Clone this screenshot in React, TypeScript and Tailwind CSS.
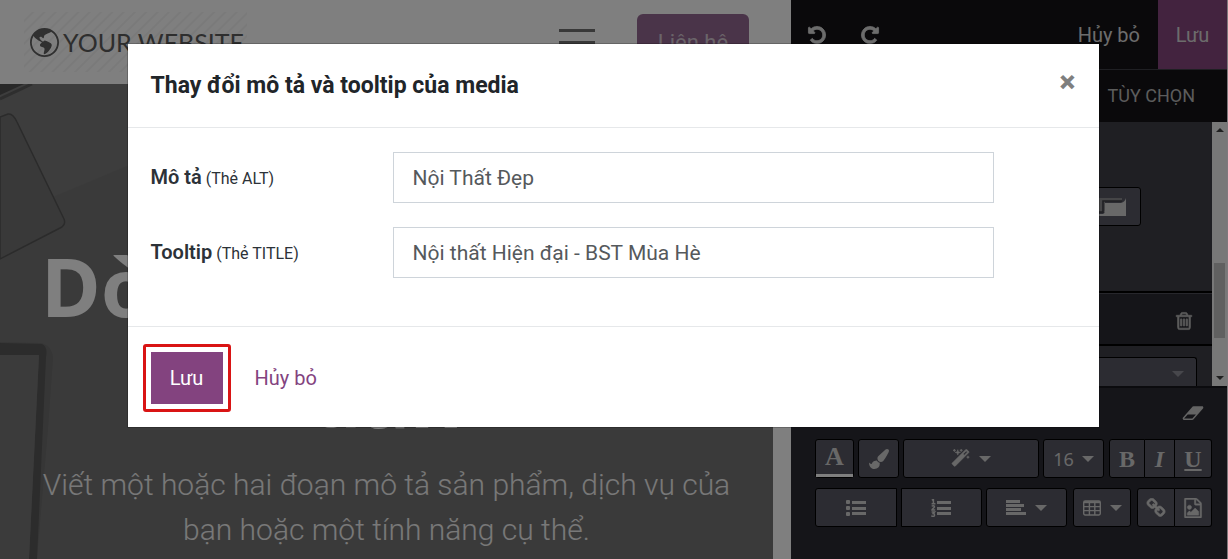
import React from "react";
import { BsGlobeAmericas } from "react-icons/bs";

const undo = "M1664 896q0 156-61 298t-164 245-245 164-298 61q-172 0-327-72.5t-264-204.5q-7-10-6.5-22.5t8.5-20.5l137-138q10-9 25-9 16 2 23 12 73 95 179 147t225 52q104 0 198.5-40.5t163.5-109.5 109.5-163.5 40.5-198.5-40.5-198.5-109.5-163.5-163.5-109.5-198.5-40.5q-98 0-188 35.5t-160 101.5l137 138q31 30 14 69-17 40-59 40h-448q-26 0-45-19t-19-45v-448q0-42 40-59 39-17 69 14l130 129q107-101 244.5-156.5t284.5-55.5q156 0 298 61t245 164 164 245 61 298z";
const redo = "M1664 256v448q0 26-19 45t-45 19h-448q-42 0-59-40-17-39 14-69l138-138q-148-137-349-137-104 0-198.5 40.5t-163.5 109.5-109.5 163.5-40.5 198.5 40.5 198.5 109.5 163.5 163.5 109.5 198.5 40.5q119 0 225-52t179-147q7-10 23-12 15 0 25 9l137 138q9 8 9.5 20.5t-7.5 22.5q-109 132-264 204.5t-327 72.5q-156 0-298-61t-245-164-164-245-61-298 61-298 164-245 245-164 298-61q147 0 284.5 55.5t244.5 156.5l130-129q29-31 70-14 39 17 39 59z";
const trash = "M704 736v576q0 14-9 23t-23 9h-64q-14 0-23-9t-9-23v-576q0-14 9-23t23-9h64q14 0 23 9t9 23zm256 0v576q0 14-9 23t-23 9h-64q-14 0-23-9t-9-23v-576q0-14 9-23t23-9h64q14 0 23 9t9 23zm256 0v576q0 14-9 23t-23 9h-64q-14 0-23-9t-9-23v-576q0-14 9-23t23-9h64q14 0 23 9t9 23zm128 724v-948h-896v948q0 22 7 40.5t14.5 27 10.5 8.5h832q3 0 10.5-8.5t14.5-27 7-40.5zm-672-1076h448l-48-117q-7-9-17-11h-317q-10 2-17 11zm928 32v64q0 14-9 23t-23 9h-96v948q0 83-47 143.5t-113 60.5h-832q-66 0-113-58.5t-47-141.5v-952h-96q-14 0-23-9t-9-23v-64q0-14 9-23t23-9h309l70-167q15-37 54-63t79-26h320q40 0 79 26t54 63l70 167h309q14 0 23 9t9 23z";
const eraser = "M960 1408l336-384h-768l-336 384h768zm1013-1077q15 34 9.5 71.5t-30.5 65.5l-896 1024q-38 44-96 44h-768q-38 0-69.5-20.5t-47.5-54.5q-15-34-9.5-71.5t30.5-65.5l896-1024q38-44 96-44h768q38 0 69.5 20.5t47.5 54.5z";
const magic = "M1254 581l293-293-107-107-293 293zm447-293q0 27-18 45l-1286 1286q-18 18-45 18t-45-18l-198-198q-18-18-18-45t18-45l1286-1286q18-18 45-18t45 18l198 198q18 18 18 45zm-1351-190l98 30-98 30-30 98-30-98-98-30 98-30 30-98zm350 162l196 60-196 60-60 196-60-196-196-60 196-60 60-196zm930 478l98 30-98 30-30 98-30-98-98-30 98-30 30-98zm-640-640l98 30-98 30-30 98-30-98-98-30 98-30 30-98z";
const brush = "M1615 0q70 0 122.5 46.5t52.5 116.5q0 63-45 151-332 629-465 752-97 91-218 91-126 0-216.5-92.5t-90.5-219.5q0-128 92-212l638-579q59-54 130-54zm-909 1034q39 76 106.5 130t150.5 76l1 71q4 213-129.5 347t-348.5 134q-123 0-218-46.5t-152.5-127.5-86.5-183-29-220q7 5 41 30t62 44.5 59 36.5 46 17q41 0 55-37 25-66 57.5-112.5t69.5-76 88-47.5 103-25.5 125-10.5z";
const link = "M1520 1216q0-40-28-68l-208-208q-28-28-68-28-42 0-72 32 3 3 19 18.5t21.5 21.5 15 19 13 25.5 3.5 27.5q0 40-28 68t-68 28q-15 0-27.5-3.5t-25.5-13-19-15-21.5-21.5-18.5-19q-33 31-33 73 0 40 28 68l206 207q27 27 68 27 40 0 68-26l147-146q28-28 28-67zm-703-705q0-40-28-68l-206-207q-28-28-68-28-39 0-68 27l-147 146q-28 28-28 67 0 40 28 68l208 208q27 27 68 27 42 0 72-31-3-3-19-18.5t-21.5-21.5-15-19-13-25.5-3.5-27.5q0-40 28-68t68-28q15 0 27.5 3.5t25.5 13 19 15 21.5 21.5 18.5 19q33-31 33-73zm895 705q0 120-85 203l-147 146q-83 83-203 83-121 0-204-85l-206-207q-83-83-83-203 0-123 88-209l-88-88q-86 88-208 88-120 0-204-84l-208-208q-84-84-84-204t85-203l147-146q83-83 203-83 121 0 204 85l206 207q83 83 83 203 0 123-88 209l88 88q86-88 208-88 120 0 204 84l208 208q84 84 84 204z";
const fileImage = "M1596 380q28 28 48 76t20 88v1152q0 40-28 68t-68 28h-1344q-40 0-68-28t-28-68v-1600q0-40 28-68t68-28h896q40 0 88 20t76 48zm-444-244v376h376q-10-29-22-41l-313-313q-12-12-41-22zm384 1528v-1024h-416q-40 0-68-28t-28-68v-416h-768v1536h1280zm-128-448v320h-1024v-192l192-192 128 128 384-384zm-832-192q-80 0-136-56t-56-136 56-136 136-56 136 56 56 136-56 136-136 56z";

type GlyphProps = { d: string; className: string; box?: string; weight?: number };

function Glyph({ d, className, box = "0 0 1792 1792", weight = 0 }: GlyphProps) {
  return (
    <svg viewBox={box} className={className} fill="currentColor" aria-hidden="true">
      <path d={d} stroke="currentColor" strokeWidth={weight} />
    </svg>
  );
}

function Caret() {
  return (
    <svg viewBox="0 0 12 6" className="h-[6px] w-3" fill="currentColor" aria-hidden="true">
      <path d="M0 0h12L6 6z" />
    </svg>
  );
}

function Lines({ kind }: { kind: "ul" | "ol" | "left" }) {
  return (
    <svg viewBox="0 0 20 18" className="h-[18px] w-5" fill="currentColor" aria-hidden="true">
      {kind === "left" ? (
        <path d="M0 1h14v3H0zM0 5h18v3H0zM0 9h15v3H0zM0 13h20v3H0z" />
      ) : (
        <path d="M6 2h14v3H6zM6 8h14v3H6zM6 13h14v3H6z" />
      )}
      {kind === "ul" && (
        <g>
          <rect x="0" y="1" width="4" height="4" rx="1" />
          <rect x="0" y="7" width="4" height="4" rx="1" />
          <rect x="0" y="13" width="4" height="4" rx="1" />
        </g>
      )}
      {kind === "ol" && (
        <path
          d="M.8 1.2L2.4 .4V4.4M.6 4.8H4.4M.8 7.4C1.6 6.4 3.6 6.6 3.4 8 3 9.2 1 9.6 1 11H4.2M.6 13H3.6L2.2 14.6C4 14.6 4 17.4 2.2 17.4 1.4 17.4 .8 17.2.4 16.6"
          fill="none"
          stroke="currentColor"
          strokeWidth="1.5"
        />
      )}
    </svg>
  );
}

function TableIcon() {
  return (
    <svg viewBox="0 0 18 16" className="h-4 w-[18px]" fill="none" stroke="currentColor" aria-hidden="true">
      <rect x="0.7" y="1" width="16.6" height="14" rx="1.4" strokeWidth="1.4" />
      <path d="M1 2.2h16" strokeWidth="2" />
      <path d="M1 6.6h16M1 10.6h16M6.4 2v13M11.8 2v13" strokeWidth="1.4" />
    </svg>
  );
}

function Tool({ label, className, children }: { label: string; className: string; children: React.ReactNode }) {
  return (
    <button
      type="button"
      aria-label={label}
      className={"flex h-[39px] items-center justify-center border border-black bg-[#595964] text-[#d0d0d0] " + className}
    >
      {children}
    </button>
  );
}

function Website() {
  return (
    <main className="flex min-w-0 flex-1 bg-white">
      <div className="flex min-w-0 flex-1 flex-col">
        <header className="flex h-[84px] shrink-0 items-center pl-6 pr-6">
          <a
            href="#"
            className="flex h-[60px] w-[223px] items-center gap-1 bg-[repeating-linear-gradient(135deg,transparent_0_5px,#f5f5f5_6px_7px,transparent_8px)] pl-[6px] font-['Lato'] text-[25px] leading-none text-[#5c5c5c]"
          >
            <BsGlobeAmericas className="size-[29px] shrink-0 text-[#606060]" />
            <span className="whitespace-nowrap">YOUR WEBSITE</span>
          </a>
          <button type="button" aria-label="Menu" className="ml-auto mr-[42px] flex w-9 flex-col gap-[9px]">
            <span className="h-[3px] bg-[#707070]" />
            <span className="h-[3px] bg-[#707070]" />
            <span className="h-[3px] bg-[#707070]" />
          </button>
          <a href="#" className="flex h-14 w-28 items-center justify-center rounded-md bg-[#946892] text-[22px] text-[#d4c8d4]">
            Liên hệ
          </a>
        </header>
        <section className="relative min-h-0 flex-1 overflow-hidden bg-[#757575] text-center">
          <svg viewBox="0 0 773 475" className="absolute left-0 top-0 h-[475px] w-[773px]" aria-hidden="true">
            <path d="M0 0h773v0L127 82 0 135z" fill="#7a7a7a" />
            <path d="M0 0h24L0 11z" fill="#505050" />
            <path d="M0 15L32 0" stroke="#5c5c5c" strokeWidth="3" />
            <path d="M0 33L8 30Q13 29 17 38L64 135Q66 140 62 143L0 175z" fill="#727272" stroke="#565656" strokeWidth="1.5" />
            <path d="M0 258L42 259Q53 263 53 275L48 345 37 475H0z" fill="#6c6c6c" />
            <path d="M0 259L42 260Q48 263 46 273L37 475H29L39 271H0z" fill="#585858" />
            <path d="M0 271H39L29 475H0z" fill="#767676" />
          </svg>
          <div className="relative pt-[146px]">
            <h1 className="font-['Noto_Sans'] text-[81px] font-bold leading-[111px] text-white">Dòng tiêu đề hấp dẫn</h1>
            <p className="mx-auto mt-[10px] max-w-[710px] text-[30px] font-light leading-[45px] text-[#f0f0f0]">
              Viết một hoặc hai đoạn mô tả sản phẩm, dịch vụ của bạn hoặc một tính năng cụ thể.
            </p>
          </div>
        </section>
      </div>
      <div className="w-[18px] shrink-0 bg-white" />
    </main>
  );
}

function Editor() {
  return (
    <aside className="flex w-[437px] shrink-0 flex-col border-r border-[#fff0f8] bg-[#2b2b33] text-[#d9d9d9]">
      <div className="flex h-[69px] shrink-0 bg-[#141217] text-xl">
        <button type="button" aria-label="Undo" className="flex w-[52px] items-center justify-center">
          <Glyph d={undo} weight={70} className="size-5" />
        </button>
        <button type="button" aria-label="Redo" className="flex w-[54px] items-center justify-center">
          <Glyph d={redo} weight={70} className="size-5" />
        </button>
        <button type="button" className="ml-auto px-[18px]">Hủy bỏ</button>
        <button type="button" className="w-[69px] bg-[#87467f]">Lưu</button>
      </div>
      <div className="flex h-[53px] shrink-0 items-center justify-end border-t border-[#3e3e46] bg-[#141217] pr-8 text-lg text-[#b8b8b8]">
        TÙY CHỌN
      </div>
      <div className="flex h-[264px] shrink-0">
        <div className="flex min-w-0 flex-1 flex-col bg-[#3e3e46]">
          <div className="flex h-[171px] items-center justify-end border-b-2 border-black pr-[71px]">
            <Tool label="Shape" className="w-[70px] justify-end rounded-[3px] pr-[14px]">
              <svg viewBox="0 0 32 20" className="h-5 w-8" aria-hidden="true">
                <path d="M0 1H28V4H11V15H0z" fill="#8a8a8e" />
                <path d="M0 15H9V4H28" fill="none" stroke="#3e3e46" strokeWidth="1.6" />
                <path d="M11 6H27Q31 5 32 1V19H0V17H9Q11 16 11 13z" fill="#d0d0d0" />
              </svg>
            </Tool>
          </div>
          <div className="flex h-[53px] items-center justify-end border-b-2 border-t border-b-black border-t-[#4e4e58] bg-[#2b2b33] pr-[18px] pt-[3px]">
            <button type="button" aria-label="Delete" className="text-[#b8b8b8]">
              <Glyph d={trash} weight={60} className="size-5" />
            </button>
          </div>
          <div className="flex flex-1 pl-6 pr-[15px] pt-[11px]">
            <div className="flex flex-1 items-center justify-end rounded-t-[3px] border border-b-0 border-black bg-[#595964] pr-3 pt-1 text-[#8f8f98]">
              <Caret />
            </div>
          </div>
        </div>
        <div className="flex w-[15px] flex-col items-center justify-between bg-[#f1f1f1] py-[6px] text-[#404040]">
          <svg viewBox="0 0 8 4" className="h-1 w-2" fill="currentColor" aria-hidden="true"><path d="M0 4h8L4 0z" /></svg>
          <div className="mt-[131px] h-[75px] w-[11px] bg-[#c1c1c1]" />
          <svg viewBox="0 0 8 4" className="mt-auto h-1 w-2" fill="currentColor" aria-hidden="true"><path d="M0 0h8L4 4z" /></svg>
        </div>
      </div>
      <div className="flex flex-col border-t-2 border-[#17171c] pl-6 pr-[15px]">
        <div className="flex h-[51px] items-center justify-end pb-[2px] pr-2">
          <button type="button" aria-label="Remove format" className="text-[#c8c8c8]">
            <Glyph d={eraser} box="0 0 2048 1792" className="h-5 w-[22px]" />
          </button>
        </div>
        <div className="flex gap-1">
          <Tool label="Text color" className="w-[39px] flex-col rounded-[3px]">
            <span className="flex flex-1 items-center font-['Liberation_Serif'] text-[26px] font-bold leading-none">A</span>
            <span className="h-[3px] w-full bg-white" />
          </Tool>
          <Tool label="Background color" className="w-[41px] rounded-[3px]">
            <Glyph d={brush} className="size-5" />
          </Tool>
          <Tool label="Style" className="min-w-0 flex-1 gap-[9px] rounded-[3px]">
            <Glyph d={magic} weight={50} className="size-[19px]" />
            <Caret />
          </Tool>
          <Tool label="Font size" className="w-[61px] gap-2 rounded-[3px] font-['Noto_Sans'] text-lg">
            16
            <Caret />
          </Tool>
          <div className="ml-px flex font-['Liberation_Serif'] text-2xl font-bold">
            <Tool label="Bold" className="w-9 rounded-l-[3px]">B</Tool>
            <Tool label="Italic" className="w-[30px] border-l-0 italic">I</Tool>
            <Tool label="Underline" className="w-[37px] rounded-r-[3px] border-l-0 underline underline-offset-2">U</Tool>
          </div>
        </div>
        <div className="mt-[10px] flex gap-[6px]">
          <div className="flex min-w-0 flex-1 gap-1">
            <Tool label="Unordered list" className="flex-1 rounded-l-[3px]"><Lines kind="ul" /></Tool>
            <Tool label="Ordered list" className="flex-1 rounded-r-[3px]"><Lines kind="ol" /></Tool>
            <Tool label="Paragraph" className="w-[81px] gap-[9px] rounded-[3px]"><Lines kind="left" /><Caret /></Tool>
          </div>
          <Tool label="Table" className="w-[58px] gap-[9px] rounded-[3px]"><TableIcon /><Caret /></Tool>
          <div className="flex">
            <Tool label="Link" className="w-[38px] rounded-l-[3px]"><Glyph d={link} weight={60} className="size-5" /></Tool>
            <Tool label="Picture" className="w-[37px] rounded-r-[3px] border-l-0"><Glyph d={fileImage} weight={40} className="size-5" /></Tool>
          </div>
        </div>
      </div>
    </aside>
  );
}

function Field({ id, label, hint, value }: { id: string; label: string; hint: string; value: string }) {
  return (
    <div className="flex items-center">
      <label htmlFor={id} className="flex w-[242px] shrink-0 items-baseline gap-1 pb-[2px] text-base text-[#2c3238]">
        <span className="text-xl font-semibold">{label}</span>
        <span>{hint}</span>
      </label>
      <input
        id={id}
        type="text"
        defaultValue={value}
        className="h-[51px] min-w-0 flex-1 border border-[#ced4da] px-[19px] text-[21px] text-[#55595c] outline-none"
      />
    </div>
  );
}

function MediaDialog() {
  return (
    <div role="dialog" aria-labelledby="dialog-title" className="w-full max-w-[971px] bg-white shadow-[0_0_0_1px_rgba(0,0,0,0.2)]">
      <div className="flex h-[84px] items-center justify-between border-b border-[#e6e8ea] px-[23px]">
        <h2 id="dialog-title" className="pt-[2px] text-[23px] font-bold text-[#212529]">Thay đổi mô tả và tooltip của media</h2>
        <button type="button" aria-label="Close" className="pb-2 text-[30px] font-black leading-none text-[#7f7f7f]">×</button>
      </div>
      <form className="flex flex-col gap-6 pb-12 pl-[23px] pr-[105px] pt-6">
        <Field id="alt" label="Mô tả" hint="(Thẻ ALT)" value="Nội Thất Đẹp" />
        <Field id="title" label="Tooltip" hint="(Thẻ TITLE)" value="Nội thất Hiện đại - BST Mùa Hè" />
      </form>
      <div className="flex h-[101px] items-center gap-1 border-t border-[#e6e8ea] px-[15px] pt-px text-xl">
        <div className="rounded-[3px] border-[3px] border-[#d91414] p-[5px]">
          <button type="button" className="h-[52px] w-[72px] bg-[#83437f] text-white">Lưu</button>
        </div>
        <button type="button" className="h-[52px] px-5 text-[#83437f]">Hủy bỏ</button>
      </div>
    </div>
  );
}

export default function App() {
  return (
    <div className="relative flex h-screen overflow-hidden font-['Roboto',sans-serif]">
      <Website />
      <Editor />
      <div className="absolute inset-0 flex items-start justify-center bg-black/50 pr-[2px] pt-11">
        <MediaDialog />
      </div>
    </div>
  );
}
